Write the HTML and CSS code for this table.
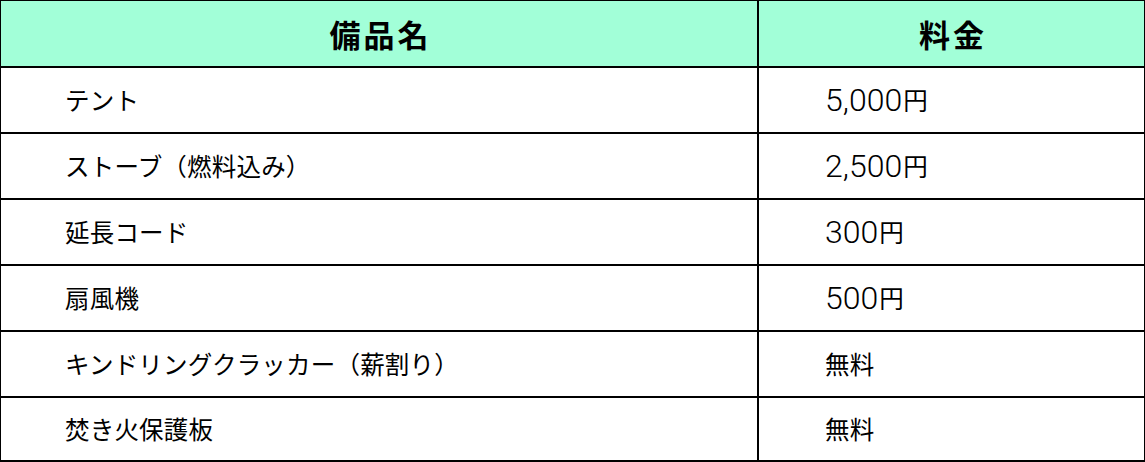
FILE: index.html
```html
<!DOCTYPE html>
<html lang="ja">
<head>
<meta charset="utf-8">
<title>備品料金</title>
<link rel="stylesheet" href="styles.css">
</head>
<body>
<div class="table" role="table">
  <div class="cell head" role="columnheader"><span class="head-text">備品名</span></div>
  <div class="cell head" role="columnheader"><span class="head-text">料金</span></div>

  <div class="cell name" role="cell">テント</div>
  <div class="cell price" role="cell"><span class="num">5,000</span>円</div>

  <div class="cell name" role="cell">ストーブ（燃料込み）</div>
  <div class="cell price" role="cell"><span class="num">2,500</span>円</div>

  <div class="cell name" role="cell">延長コード</div>
  <div class="cell price" role="cell"><span class="num">300</span>円</div>

  <div class="cell name" role="cell">扇風機</div>
  <div class="cell price" role="cell"><span class="num">500</span>円</div>

  <div class="cell name" role="cell">キンドリングクラッカー（薪割り）</div>
  <div class="cell price" role="cell">無料</div>

  <div class="cell name" role="cell">焚き火保護板</div>
  <div class="cell price" role="cell">無料</div>
</div>
</body>
</html>
```
FILE: styles.css
```css
html, body {
  margin: 0;
  padding: 0;
  background: #ffffff;
}

body {
  font-family: "Noto Sans CJK JP", "Noto Sans", sans-serif;
  color: #000000;
}

.table {
  box-sizing: border-box;
  width: 1145px;
  height: 462px;
  display: grid;
  grid-template-columns: 756px 385px;
  grid-template-rows: 65px repeat(5, 64px) 62px;
  gap: 2px;
  padding: 1px 1px 2px 1px;
  background: #000000;
}

.cell {
  display: flex;
  align-items: center;
  background: #ffffff;
  font-size: 24.5px;
  letter-spacing: 0.2px;
  line-height: 1;
  white-space: nowrap;
}

.head {
  background: #a2ffd8;
  justify-content: center;
}

.head-text {
  font-size: 31px;
  font-weight: 700;
  letter-spacing: 3px;
  margin-right: -3px;
}

.name {
  padding-left: 64px;
}

.price {
  padding-left: 66px;
}

.num {
  font-family: Roboto, "Liberation Sans", sans-serif;
  font-weight: 300;
  font-size: 32px;
  letter-spacing: 0;
  margin-right: 1px;
}
```
